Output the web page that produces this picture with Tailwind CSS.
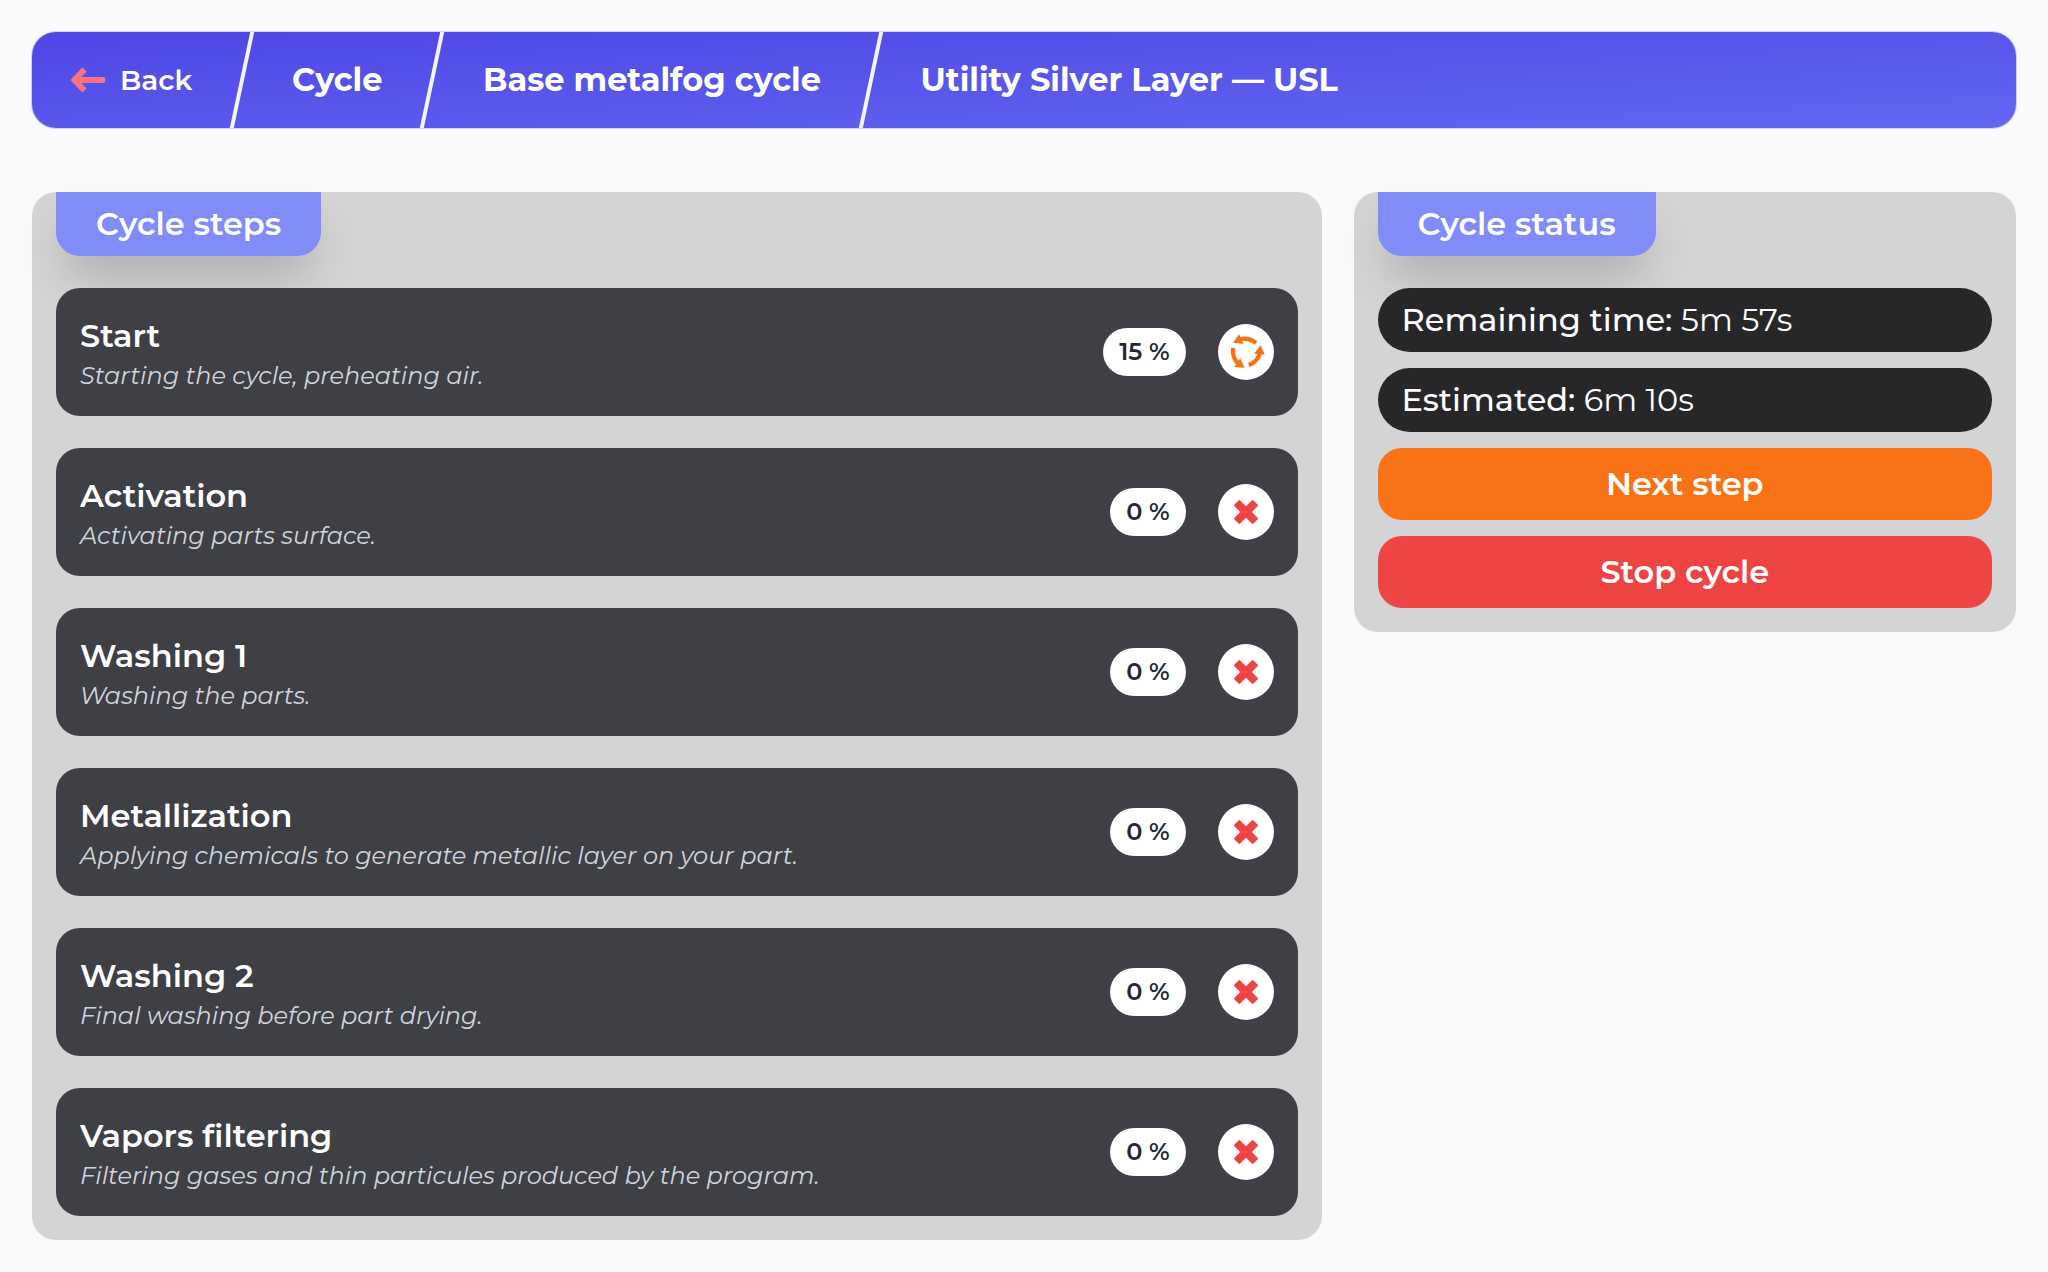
<!DOCTYPE html>
<html lang="en">
<head>
<meta charset="utf-8">
<meta name="viewport" content="width=device-width, initial-scale=1">
<title>Cycle — Utility Silver Layer</title>
<script src="https://cdn.jsdelivr.net/npm/@tailwindcss/browser@4"></script>
</head>
<body class="min-h-screen bg-[#fafafa] p-8 font-['Montserrat','Inter',sans-serif] text-[32px] leading-10 text-white antialiased">
<svg class="hidden" aria-hidden="true">
  <symbol id="cross" viewBox="0 0 24 24"><path fill="currentColor" d="M4.600.4a1.200 1.200 0 0 1 1.600 0L12 6.200 17.800.4a1.200 1.200 0 0 1 1.600 0l4.200 4.200a1.200 1.200 0 0 1 0 1.600L17.800 12l5.800 5.800a1.200 1.200 0 0 1 0 1.600l-4.200 4.200a1.200 1.200 0 0 1-1.600 0L12 17.800l-5.800 5.800a1.200 1.200 0 0 1-1.600 0L.4 19.400a1.200 1.200 0 0 1 0-1.600L6.200 12 .4 6.200a1.200 1.200 0 0 1 0-1.600z"/></symbol>
</svg>

<nav aria-label="Breadcrumb" class="flex h-24 overflow-hidden rounded-3xl bg-linear-to-br from-[#4f46e5] to-[#6366f1] font-bold ring-1 ring-[#c7d2fe]">
  <a href="#" class="-ml-6 flex -skew-x-12 items-center border-r-4 border-zinc-100 pr-12 pl-[60px] text-[28px] font-semibold">
    <span class="flex skew-x-12 items-center gap-3">
      <svg class="h-8 w-10 text-[#fb7185]" viewBox="0 0 40 32" fill="none" stroke="currentColor" stroke-width="6"><path d="M9 16H34.500" stroke-linecap="round"/><path d="M16.500 5.500 6.500 16 16.500 26.500" stroke-linejoin="miter"/></svg>
      Back
    </span>
  </a>
  <a href="#" class="flex -skew-x-12 items-center border-r-4 border-zinc-100 px-12"><span class="skew-x-12">Cycle</span></a>
  <a href="#" class="flex -skew-x-12 items-center border-r-4 border-zinc-100 px-12"><span class="skew-x-12">Base metalfog cycle</span></a>
  <span aria-current="page" class="flex items-center px-12">Utility Silver Layer — USL</span>
</nav>

<main class="mt-16 flex items-start gap-8">
  <section class="w-[65%] shrink-0 rounded-3xl bg-[#d4d4d4] px-6 pb-6">
    <h2 class="mb-8 w-fit rounded-b-3xl bg-[#818cf8] px-10 py-3 font-semibold shadow-2xl">Cycle steps</h2>
    <ul id="steps" class="flex flex-col gap-8"></ul>
  </section>

  <section class="flex-1 rounded-3xl bg-[#d4d4d4] px-6 pb-6">
    <h2 class="mb-8 w-fit rounded-b-3xl bg-[#818cf8] px-10 py-3 font-semibold shadow-2xl">Cycle status</h2>
    <div class="flex flex-col gap-4">
      <p class="rounded-full bg-[#27272a] px-6 py-3"><span class="font-medium">Remaining time:</span> 5m 57s</p>
      <p class="rounded-full bg-[#27272a] px-6 py-3"><span class="font-medium">Estimated:</span> 6m 10s</p>
      <button type="button" class="rounded-3xl bg-[#f97316] py-4 font-semibold">Next step</button>
      <button type="button" class="rounded-3xl bg-[#ef4444] py-4 font-semibold">Stop cycle</button>
    </div>
  </section>
</main>

<script>
  const steps = [
    ['Start', 'Starting the cycle, preheating air.', 15],
    ['Activation', 'Activating parts surface.', 0],
    ['Washing 1', 'Washing the parts.', 0],
    ['Metallization', 'Applying chemicals to generate metallic layer on your part.', 0],
    ['Washing 2', 'Final washing before part drying.', 0],
    ['Vapors filtering', 'Filtering gases and thin particules produced by the program.', 0],
  ];
  const arm = '<path d="M10-9Q3-15-7-12.500" fill="none" stroke="currentColor" stroke-width="4.300"/><path d="M-7-17.800-13-9.200-2.500-8z" fill="currentColor"/>';
  const running = `<svg class="size-10 text-[#f97316]" viewBox="-20 -20 40 40"><g>${arm}</g><g transform="rotate(120)">${arm}</g><g transform="rotate(240)">${arm}</g></svg>`;
  const pending = '<svg class="size-6 text-[#ef4444]"><use href="#cross"/></svg>';
  document.getElementById('steps').innerHTML = steps.map(([name, text, pct]) => `
    <li class="flex h-32 items-center rounded-3xl bg-[#3f3f46] px-6">
      <div class="flex-1 pt-2">
        <h3 class="font-semibold">${name}</h3>
        <p class="text-2xl leading-10 text-[#d1d5db] italic">${text}</p>
      </div>
      <span class="rounded-3xl bg-white px-4 py-2 text-2xl font-semibold text-[#1f2937]">${pct} %</span>
      <span class="ml-8 flex size-14 items-center justify-center rounded-full bg-white">${pct ? running : pending}</span>
    </li>`).join('');
</script>
</body>
</html>
